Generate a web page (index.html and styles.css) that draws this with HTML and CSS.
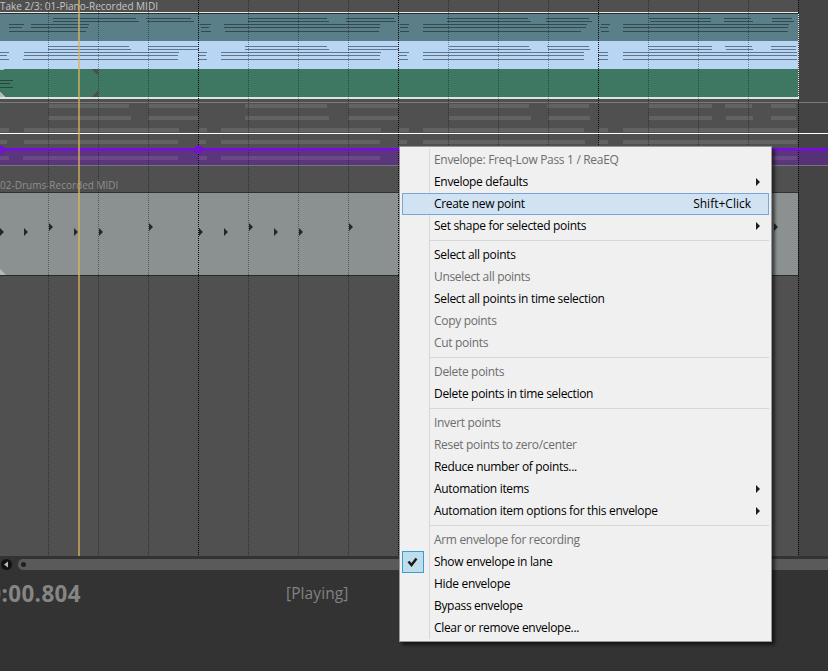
FILE: index.html
```html
<!DOCTYPE html>
<html lang="en">
<head>
<meta charset="utf-8">
<title>Arrange view</title>
<link rel="stylesheet" href="styles.css">
</head>
<body>
<main class="arrange">
  <div class="track-label"><span class="label-piano">Take 2/3: 01-Piano-Recorded MIDI</span></div>
  <section class="piano-item">
    <svg class="lane teal" width="798" height="27"><path d="M53 4.5H136M146 4.5H191M248 4.5H327M346 4.5H394M447 4.5H528M546 4.5H589M649 4.5H711M724 4.5H751M772 4.5H792M53 7.5H139M147 7.5H194M248 7.5H329M346 7.5H396M447 7.5H531M546 7.5H592M650 7.5H711M724 7.5H753M772 7.5H794M9 10.5H24M31 10.5H89M200 10.5H211M224 10.5H380M400 10.5H409M423 10.5H587M601 10.5H610M623 10.5H789M9 13.5H22M31 13.5H88M201 13.5H209M224 13.5H380M400 13.5H408M423 13.5H586M600 13.5H608M623 13.5H788M9 17.5H86M201 17.5H211M225 17.5H379M400 17.5H409M423 17.5H581M601 17.5H609M623 17.5H788"/></svg>
    <svg class="lane blue" width="798" height="28"><path d="M48 5.5H129M148 5.5H199M245 5.5H327M348 5.5H399M449 5.5H529M547 5.5H589M648 5.5H712M725 5.5H752M771 5.5H796M48 8.5H131M148 8.5H199M245 8.5H329M348 8.5H399M449 8.5H531M548 8.5H590M649 8.5H712M726 8.5H753M771 8.5H796M0 11.5H9M24 11.5H179M198 11.5H207M221 11.5H381M399 11.5H409M423 11.5H584M598 11.5H608M623 11.5H797M0 14.5H7M24 14.5H178M198 14.5H206M221 14.5H380M399 14.5H407M423 14.5H584M598 14.5H608M623 14.5H797M0 18.5H9M23 18.5H178M198 18.5H207M221 18.5H380M399 18.5H408M423 18.5H584M598 18.5H608M623 18.5H797"/></svg>
    <svg class="lane green" width="798" height="28"><path d="M0 11.5H13M0 14.5H10M0 18.5H13"/><path class="corner" d="M91 0H98V7ZM91 28H98V21Z"/><path class="fade" d="M0 23L5 28H0Z"/><path class="tip" d="M0 0H4V1H0Z"/></svg>
  </section>
  <section class="envelope-lane">
    <svg width="828" height="68">
      <g class="ghost"><path d="M48 7H129M148 7H199M245 7H327M348 7H399M449 7H529M547 7H589M648 7H712M725 7H752M771 7H796M48 19H131M148 19H199M245 19H329M348 19H399M449 19H531M548 19H590M649 19H712M726 19H753M771 19H796M0 31H9M24 31H179M198 31H207M221 31H381M399 31H409M423 31H584M598 31H608M623 31H797M0 43H7M24 43H178M198 43H206M221 43H380M399 43H407M423 43H585M598 43H608M623 43H797"/></g>
      <path class="lane-edge" d="M0 3.5H828"/><path class="volume" d="M0 34.5H828"/>
      <path class="env-fill" d="M0 49H828V66H0Z"/>
      <path class="env-ghost" d="M0 59H9M23 59H178M198 59H207M221 59H380M623 59H797"/>
      <path class="env-edge" d="M0 66.500H828"/>
    </svg>
  </section>
  <div class="track-label drums-label"><span class="label-drums">02-Drums-Recorded MIDI</span></div>
  <section class="drums-item"><svg width="798" height="82"><path class="hits" d="M0 35L4 39L0 43ZM24 35L28 39L24 43ZM49 30L53 34L49 38ZM74 35L78 39L74 43ZM99 35L103 39L99 43ZM149 30L153 34L149 38ZM199 35L203 39L199 43ZM224 35L228 39L224 43ZM249 30L253 34L249 38ZM274 35L278 39L274 43ZM299 35L303 39L299 43ZM349 30L353 34L349 38ZM774 30L778 34L774 38Z"/><path class="fade" d="M0 76L6 82H0Z"/></svg></section>
  <svg class="grid" width="828" height="556"><path class="beat" d="M48.500 0V556M98.500 0V556M148.500 0V556M248.500 0V556M298.500 0V556M348.500 0V556M448.500 0V556M498.500 0V556M548.500 0V556M648.500 0V556M698.500 0V556M748.500 0V556"/><path class="measure" d="M198.500 0V556M398.500 0V556M598.500 0V556M798.500 0V556"/><path class="item-end" d="M798.500 14V99"/><path class="env-line" d="M0 149.200H828"/><circle class="env-point" cx="0" cy="149.500" r="3"/><circle class="env-point" cx="198.500" cy="149.500" r="3"/><path class="cursor" d="M79 0V556"/></svg>
</main>
<div class="scrollbar">
  <svg class="scroll-arrow" width="18" height="12"><circle cx="6.500" cy="5.500" r="5.500"/><path d="M4 5.500L8 2.500V8.500Z"/></svg>
  <div class="thumb"><span class="grip"></span></div>
</div>
<footer class="transport"><span class="time">0:00.804</span><span class="status">[Playing]</span></footer>

<nav class="menu">
  <div class="item off"><span>Envelope: Freq-Low Pass 1 / ReaEQ</span></div>
  <div class="item sub"><span>Envelope defaults</span></div>
  <div class="item active"><span>Create new point</span><kbd>Shift+Click</kbd></div>
  <div class="item sub"><span>Set shape for selected points</span></div>
  <hr>
  <div class="item"><span>Select all points</span></div>
  <div class="item off"><span>Unselect all points</span></div>
  <div class="item"><span>Select all points in time selection</span></div>
  <div class="item off"><span>Copy points</span></div>
  <div class="item off"><span>Cut points</span></div>
  <hr>
  <div class="item off"><span>Delete points</span></div>
  <div class="item"><span>Delete points in time selection</span></div>
  <hr>
  <div class="item off"><span>Invert points</span></div>
  <div class="item off"><span>Reset points to zero/center</span></div>
  <div class="item"><span>Reduce number of points...</span></div>
  <div class="item sub"><span>Automation items</span></div>
  <div class="item sub"><span>Automation item options for this envelope</span></div>
  <hr>
  <div class="item off"><span>Arm envelope for recording</span></div>
  <div class="item"><i class="check"><svg width="20" height="20"><path d="M5.500 9.500L8.500 13L13.500 6.500"/></svg></i><span>Show envelope in lane</span></div>
  <div class="item"><span>Hide envelope</span></div>
  <div class="item"><span>Bypass envelope</span></div>
  <div class="item"><span>Clear or remove envelope...</span></div>
</nav>
</body>
</html>
```

FILE: styles.css
```css
* { box-sizing: border-box; }
body { margin: 0; width: 828px; height: 671px; overflow: hidden; position: relative; background: #333; font-family: "Open Sans", "Noto Sans", sans-serif; }
svg { display: block; flex: none; }
.arrange { position: relative; height: 556px; overflow: hidden; background: linear-gradient(90deg, #505050 798px, #444 798px); }
.track-label { height: 12px; font-size: 10px; line-height: 12px; white-space: nowrap; color: #c6c6c6; }
.piano-item { width: 799px; height: 87px; border-top: 1px solid #eee9dc; border-bottom: 2px solid #dce5df; box-shadow: inset 0 1px #1f3133; padding-top: 1px; }
.lane { fill: none; stroke-width: 1; shape-rendering: crispEdges; }
.teal { background: #5a7f88; stroke: #304a50; }
.blue { background: #b9d5f4; stroke: #60758c; }
.green { background: #3e7863; stroke: #24483b; }
.green .corner { fill: #4c4f4e; stroke: none; }
.fade { fill: #b1bbb8; stroke: none; }
.tip { fill: #83dfc8; stroke: none; }
.envelope-lane { height: 67px; }
.envelope-lane svg { shape-rendering: crispEdges; }
.ghost { stroke: #626262; stroke-width: 4; }
.lane-edge { stroke: #7b7b7b; }
.volume { stroke: #fff; }
.env-fill { fill: #6420a0; fill-opacity: .53; }
.env-ghost { stroke: #6c4889; stroke-width: 4; }
.env-line { stroke: #7a08ea; stroke-width: 2.4; shape-rendering: auto; }
.env-edge { stroke: #79707f; }
.env-point { fill: #652698; stroke: #7a08ea; stroke-width: 2; shape-rendering: auto; }
.drums-label { height: 26px; padding-top: 13px; color: #8f8f8f; }
.drums-item { width: 799px; height: 84px; border-top: 1px solid #303333; border-bottom: 1px solid #282a2a; border-right: 1px solid #303333; background: #8a9190; }
.hits { fill: #222626; }
.grid { position: absolute; left: 0; top: 0; shape-rendering: crispEdges; }
.beat { stroke: #000; stroke-opacity: .38; stroke-dasharray: 1 1; }
.measure { stroke: #080808; stroke-dasharray: 1 1; }
.item-end { stroke: #eee; stroke-dasharray: 1 1; }
.cursor { stroke: #dbb45b; stroke-opacity: .68; stroke-width: 2; }
.scrollbar { height: 14px; padding-top: 3px; display: flex; }
.scroll-arrow { fill: #111; }
.scroll-arrow path { fill: #bbb; }
.thumb { flex: 1; height: 11px; background: #5a5a5a; border-radius: 5px 0 0 5px; padding: 3px; }
.grip { display: block; width: 5px; height: 5px; border-radius: 50%; background: #202020; }
.transport { position: relative; height: 101px; }
.time { position: absolute; right: 747px; top: 9px; font-size: 22.4px; letter-spacing: .4px; line-height: 30px; font-weight: 700; color: #858585; white-space: nowrap; }
.status { position: absolute; left: 286px; top: 13px; font-size: 15.5px; letter-spacing: .1px; line-height: 20px; color: #828282; }
.menu { position: absolute; left: 399px; top: 146px; width: 373px; height: 496px; padding: 2px; border: 1px solid #999; background: linear-gradient(90deg, transparent 29px, #d7d7d7 29px, #d7d7d7 30px, transparent 30px) 0 2px / 100% 490px no-repeat #f0f0f0; box-shadow: 3px 3px 3px rgba(0,0,0,.55); font-size: 12px; }
.item { position: relative; height: 22px; padding: 0 18px 0 32px; display: flex; justify-content: space-between; align-items: center; line-height: 20px; white-space: nowrap; color: #000; letter-spacing: -.32px; }
.off { color: #6d6d6d; }
.active { background: #d1e2f2; box-shadow: inset 0 0 0 1px #78a6d6; }
.item kbd { font: inherit; letter-spacing: 0; }
.sub::after { content: ""; position: absolute; right: 9px; top: 7px; border: 4px solid transparent; border-left-color: #1d1d1d; border-right: 0; }
.menu hr { height: 7px; margin: 0 0 0 28px; border: 0; background: linear-gradient(#d7d7d7, #d7d7d7) 0 3px / 100% 1px no-repeat; }
.check { position: absolute; left: 0; top: 0; width: 22px; height: 22px; background: #bfddeb; border: 1px solid #3c9bd0; }
.check path { fill: none; stroke: #1c1c1c; stroke-width: 2.500; }
```
